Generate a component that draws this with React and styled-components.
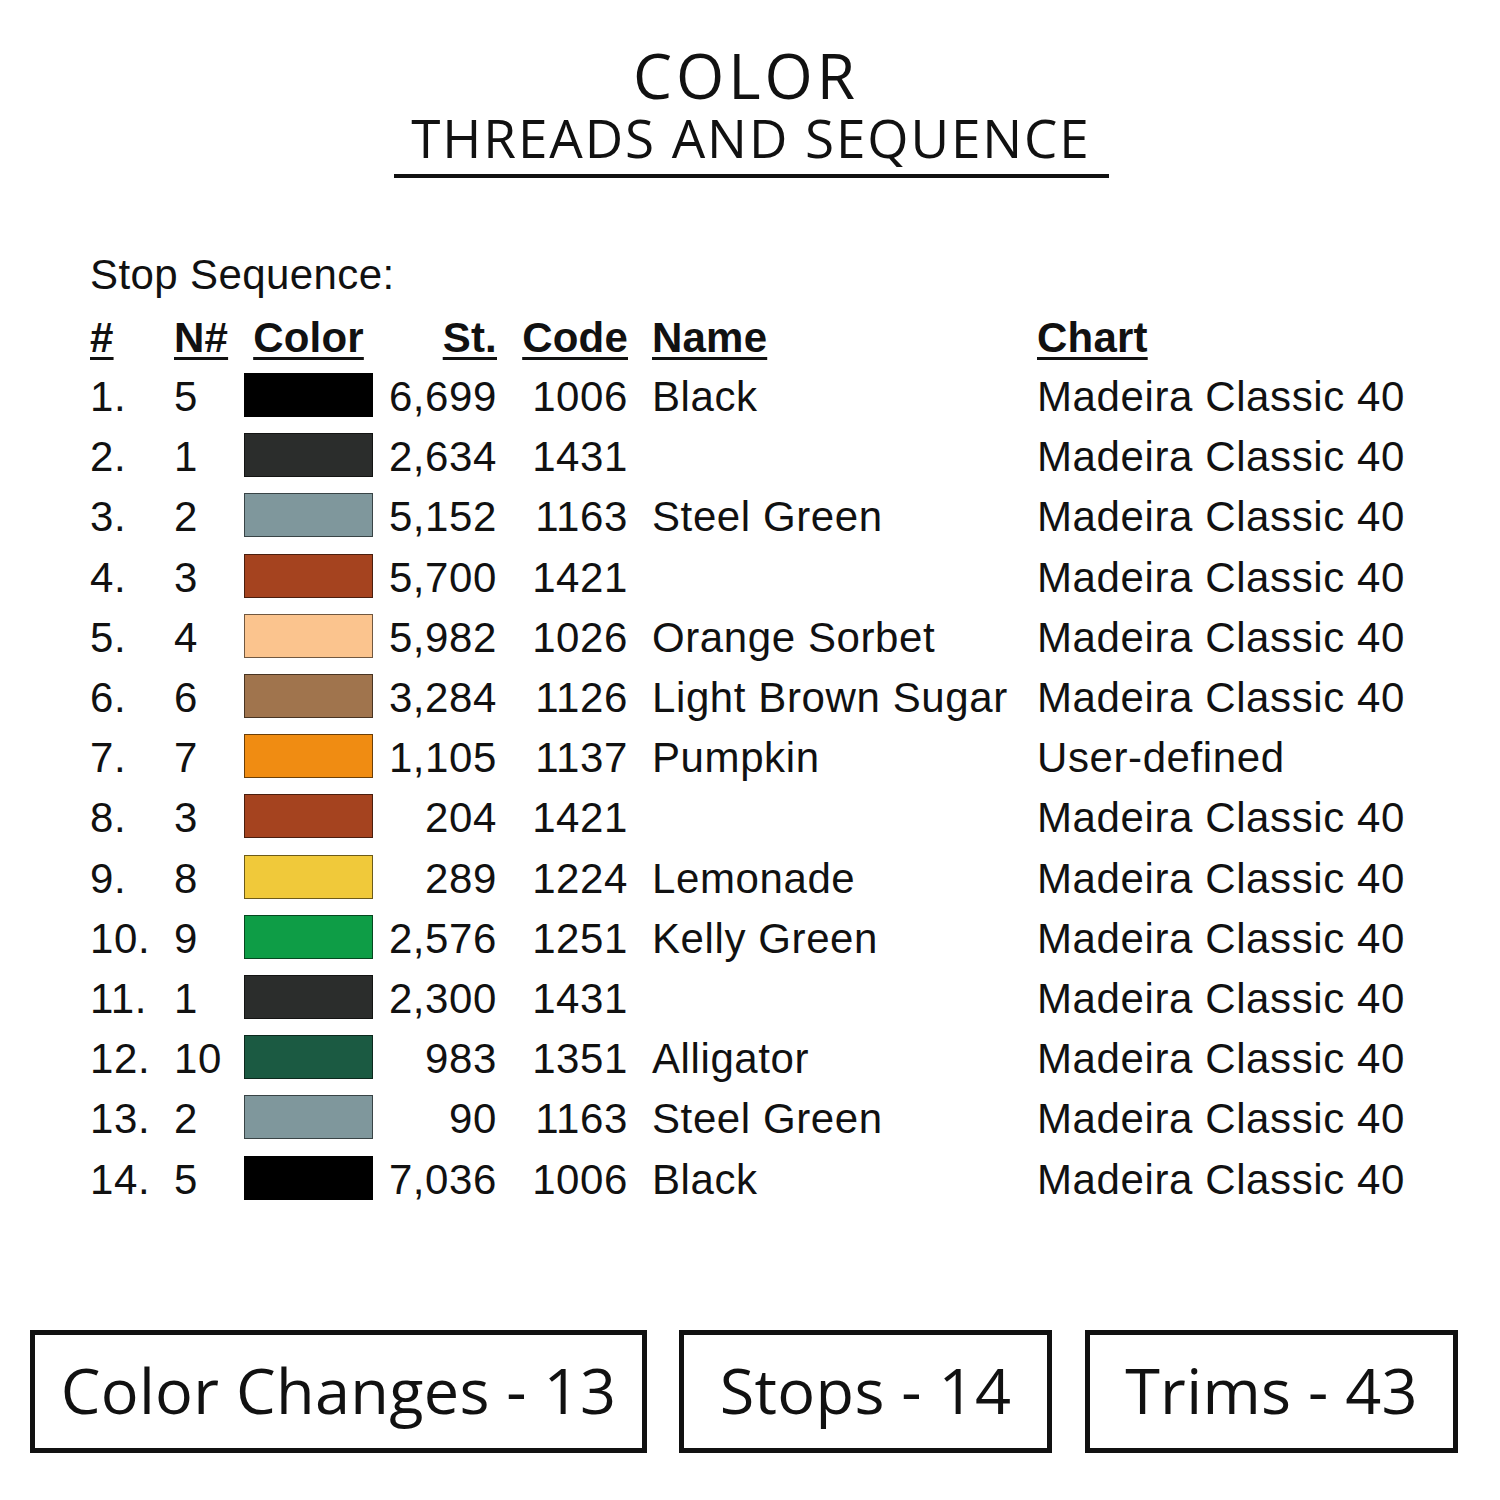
import React from 'react';
import styled, { createGlobalStyle } from 'styled-components';

const GlobalStyle = createGlobalStyle`
  html, body {
    margin: 0;
    padding: 0;
    background: #ffffff;
  }
  body {
    font-family: "Liberation Sans", Arial, sans-serif;
    color: #111;
  }
`;

const stops = [
  { n: 5, color: '#000000', st: '6,699', code: '1006', name: 'Black', chart: 'Madeira Classic 40' },
  { n: 1, color: '#2b2d2c', st: '2,634', code: '1431', name: '', chart: 'Madeira Classic 40' },
  { n: 2, color: '#7f979c', st: '5,152', code: '1163', name: 'Steel Green', chart: 'Madeira Classic 40' },
  { n: 3, color: '#a5431f', st: '5,700', code: '1421', name: '', chart: 'Madeira Classic 40' },
  { n: 4, color: '#fbc48e', st: '5,982', code: '1026', name: 'Orange Sorbet', chart: 'Madeira Classic 40' },
  { n: 6, color: '#a0744d', st: '3,284', code: '1126', name: 'Light Brown Sugar', chart: 'Madeira Classic 40' },
  { n: 7, color: '#f08c12', st: '1,105', code: '1137', name: 'Pumpkin', chart: 'User-defined' },
  { n: 3, color: '#a5431f', st: '204', code: '1421', name: '', chart: 'Madeira Classic 40' },
  { n: 8, color: '#f0c93a', st: '289', code: '1224', name: 'Lemonade', chart: 'Madeira Classic 40' },
  { n: 9, color: '#0e9d46', st: '2,576', code: '1251', name: 'Kelly Green', chart: 'Madeira Classic 40' },
  { n: 1, color: '#2b2d2c', st: '2,300', code: '1431', name: '', chart: 'Madeira Classic 40' },
  { n: 10, color: '#1b5a42', st: '983', code: '1351', name: 'Alligator', chart: 'Madeira Classic 40' },
  { n: 2, color: '#7f979c', st: '90', code: '1163', name: 'Steel Green', chart: 'Madeira Classic 40' },
  { n: 5, color: '#000000', st: '7,036', code: '1006', name: 'Black', chart: 'Madeira Classic 40' },
];

const Page = styled.div`
  width: 1500px;
  height: 1500px;
  box-sizing: border-box;
  padding-top: 44px;
  display: flex;
  flex-direction: column;
`;

const Heading = styled.header`
  display: flex;
  flex-direction: column;
  align-items: center;
  padding-left: 2px;
`;

const Title = styled.h1`
  margin: 0 10px 0 0;
  font-family: "Open Sans", "Noto Sans", sans-serif;
  font-weight: 500;
  font-size: 62px;
  line-height: 1;
  letter-spacing: 4px;
  color: #111;
`;

const Subtitle = styled.h2`
  margin: 5px 0 0;
  font-family: "Open Sans", "Noto Sans", sans-serif;
  font-weight: 400;
  font-size: 53px;
  line-height: 1;
  letter-spacing: 1.9px;
  color: #111;
`;

const Rule = styled.div`
  width: 715px;
  height: 4px;
  margin-top: 10px;
  background: #111;
`;

const Sheet = styled.section`
  padding-left: 90px;
  margin-top: 76px;
`;

const Caption = styled.div`
  font-size: 42px;
  line-height: 1;
  height: 42px;
  letter-spacing: 0.4px;
`;

const Row = styled.div`
  display: grid;
  grid-template-columns: 84px 70px 129px 124px 131px 409px auto;
  align-items: center;
  height: ${p => p.$h || 60.2}px;
  font-size: 42px;
  line-height: 1;
  letter-spacing: 0.6px;
  white-space: nowrap;
`;

const HeadRow = styled(Row)`
  margin-top: 12px;
  font-weight: 700;
  letter-spacing: 0.2px;
`;

const Cell = styled.div`
  text-align: ${p => p.$align || 'left'};
  padding-left: ${p => p.$pad || 0}px;
`;

const Under = styled.span`
  text-decoration: underline;
  text-decoration-thickness: 3px;
  text-underline-offset: 5px;
`;

const Swatch = styled.div`
  width: 129px;
  height: 44px;
  box-sizing: border-box;
  background: ${p => p.$color};
  border: 1.5px solid rgba(0, 0, 0, 0.55);
  margin-top: -4px;
`;

const Totals = styled.div`
  display: flex;
  padding-left: 30px;
  margin-top: 120px;
`;

const TotalBox = styled.div`
  width: ${p => p.$w}px;
  height: 123px;
  margin-right: ${p => p.$gap || 0}px;
  box-sizing: border-box;
  border: 5px solid #111;
  display: flex;
  align-items: center;
  justify-content: center;
  font-family: "Open Sans", "Noto Sans", sans-serif;
  font-size: 63px;
  line-height: 1;
  letter-spacing: 0.3px;
  color: #111;
  padding-bottom: 4px;
`;

export default function App() {
  return (
    <>
      <GlobalStyle />
      <Page>
        <Heading>
          <Title>COLOR</Title>
          <Subtitle>THREADS AND SEQUENCE</Subtitle>
          <Rule />
        </Heading>

        <Sheet>
          <Caption>Stop Sequence:</Caption>
          <HeadRow $h={59}>
            <Cell><Under>#</Under></Cell>
            <Cell><Under>N#</Under></Cell>
            <Cell $align="center"><Under>Color</Under></Cell>
            <Cell $align="right"><Under>St.</Under></Cell>
            <Cell $align="right"><Under>Code</Under></Cell>
            <Cell $pad={24}><Under>Name</Under></Cell>
            <Cell><Under>Chart</Under></Cell>
          </HeadRow>
          {stops.map((s, i) => (
            <Row key={i}>
              <Cell>{i + 1}.</Cell>
              <Cell>{s.n}</Cell>
              <Swatch $color={s.color} />
              <Cell $align="right">{s.st}</Cell>
              <Cell $align="right">{s.code}</Cell>
              <Cell $pad={24}>{s.name}</Cell>
              <Cell>{s.chart}</Cell>
            </Row>
          ))}
        </Sheet>

        <Totals>
          <TotalBox $w={617} $gap={32}>Color Changes - 13</TotalBox>
          <TotalBox $w={373} $gap={33}>Stops - 14</TotalBox>
          <TotalBox $w={373}>Trims - 43</TotalBox>
        </Totals>
      </Page>
    </>
  );
}
